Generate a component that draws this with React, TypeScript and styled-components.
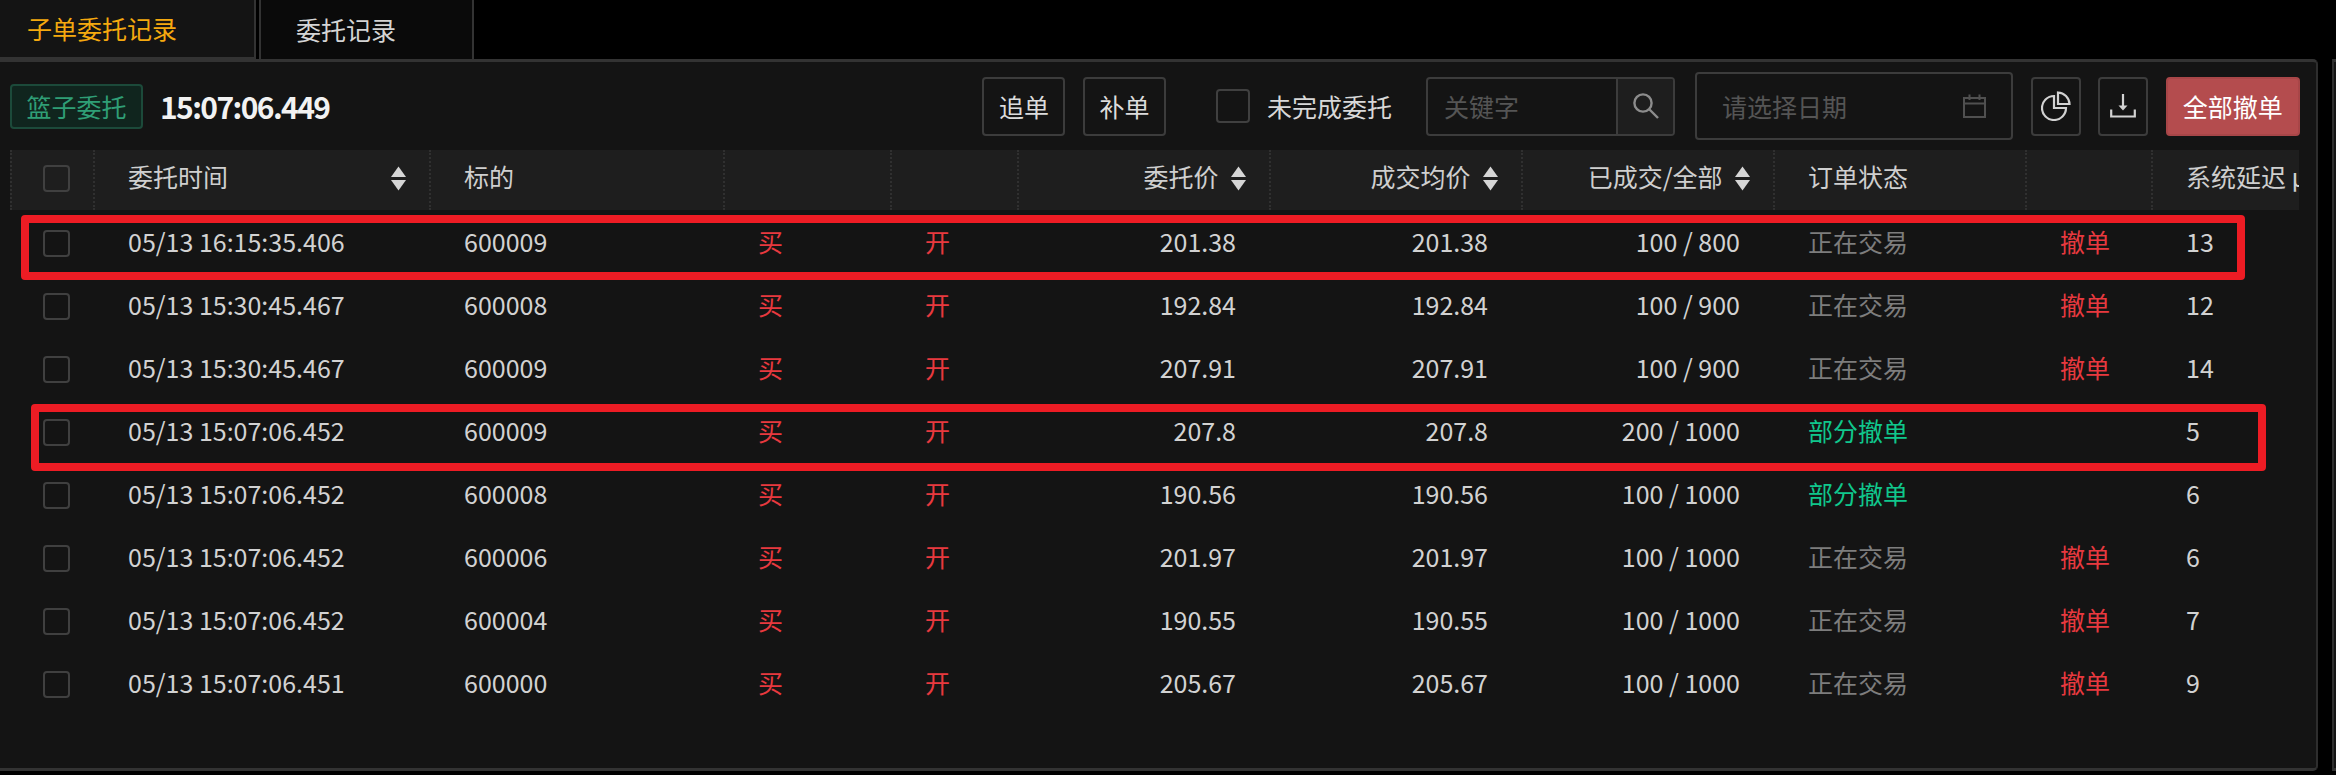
import { FC } from "react";
import styled, { createGlobalStyle } from "styled-components";

const GlobalStyle = createGlobalStyle`
    html, body {
        margin: 0;
        padding: 0;
        background: #000;
    }
    * {
        box-sizing: border-box;
    }
    body {
        font-family: "Noto Sans CJK SC", "Noto Sans", sans-serif;
        font-size: 25px;
        color: #d4d4d4;
    }
`;

const COLUMNS = "85px 336px 294px 167px 127px 252px 252px 252px 252px 126px 146px";

const Page = styled.div`
    width: 2336px;
    height: 775px;
    overflow: hidden;
    display: flex;
    flex-direction: column;
`;

const TabBar = styled.div`
    display: flex;
    height: 60px;
    flex-shrink: 0;
`;

const Tab = styled.div<{ $active?: boolean }>`
    display: flex;
    align-items: center;
    height: ${props => props.$active ? "60px" : "59px"};
    padding: 0 0 2px ${props => props.$active ? "27px" : "35px"};
    width: ${props => props.$active ? "256px" : "215px"};
    margin-right: 3px;
    background: ${props => props.$active ? "#141414" : "#0a0a0a"};
    color: ${props => props.$active ? "#f5a90f" : "#d4d4d4"};
    border-right: 2px solid #333;
    border-left: ${props => props.$active ? "none" : "2px solid #333"};
    border-bottom: ${props => props.$active ? "3px solid #333" : "none"};
`;

const Workspace = styled.div`
    display: flex;
    flex: 1;
    margin-top: -1px;
    height: 712px;
`;

const Panel = styled.div`
    width: 2318px;
    height: 712px;
    background: #141414;
    border-top: 3px solid #333;
    border-right: 2px solid #2e2e2e;
    border-bottom: 3px solid #333;
    border-bottom-right-radius: 5px;
    border-top-right-radius: 5px;
`;

const SidePanel = styled.div`
    width: 4px;
    height: 712px;
    margin-left: 14px;
    background: #141414;
    border-left: 2px solid #2e2e2e;
    border-top: 3px solid #333;
    border-bottom: 3px solid #333;
`;

const Toolbar = styled.div`
    display: flex;
    align-items: center;
    height: 88px;
    padding: 0 16px 0 10px;
`;

const Badge = styled.div`
    display: flex;
    align-items: center;
    justify-content: center;
    width: 133px;
    height: 45px;
    color: #2f9e76;
    background: #10251e;
    border: 2px solid #1c4a3a;
    border-radius: 4px;
`;

const Clock = styled.div`
    margin-left: 17px;
    font-size: 30px;
    font-weight: 700;
    color: #f2f2f2;
    letter-spacing: -1.6px;
`;

const Actions = styled.div`
    display: flex;
    align-items: center;
    margin-left: auto;
`;

const OutlineButton = styled.button<{ $gap?: number }>`
    display: flex;
    align-items: center;
    justify-content: center;
    width: 83px;
    height: 59px;
    padding: 0;
    margin-left: ${props => props.$gap ?? 0}px;
    background: transparent;
    border: 2px solid #3c3c3c;
    border-radius: 4px;
    color: #dcdcdc;
    font: inherit;
`;

const IconButton = styled(OutlineButton)`
    width: 50px;
    margin-left: 17.5px;
`;

const DangerButton = styled.button`
    width: 134.5px;
    height: 59px;
    margin-left: 17.5px;
    padding: 0;
    background: #b44c4e;
    border: 2px solid #a84648;
    border-radius: 4px;
    color: #fff;
    font: inherit;
`;

const Check = styled.input<{ $large?: boolean }>`
    appearance: none;
    display: block;
    margin: 0;
    flex-shrink: 0;
    width: ${props => props.$large ? "34px" : "27px"};
    height: ${props => props.$large ? "34px" : "27px"};
    border: 2px solid #404040;
    border-radius: 4px;
    background: transparent;
`;

const FilterLabel = styled.label`
    display: flex;
    align-items: center;
    gap: 17px;
    margin-left: 50px;
    color: #d8d8d8;
`;

const SearchBox = styled.div`
    display: flex;
    width: 249px;
    height: 59px;
    margin-left: 34px;
    border: 2px solid #3c3c3c;
    border-radius: 4px;
    overflow: hidden;
`;

const TextField = styled.input`
    flex: 1;
    min-width: 0;
    padding: 0 0 0 16px;
    background: transparent;
    border: none;
    outline: none;
    color: #d4d4d4;
    font: inherit;
    &::placeholder {
        color: #555;
        opacity: 1;
    }
`;

const SearchButton = styled.div`
    display: flex;
    align-items: center;
    justify-content: center;
    width: 57px;
    background: #1e1e1e;
    border-left: 2px solid #3c3c3c;
`;

const DateBox = styled.div`
    display: flex;
    align-items: center;
    width: 318px;
    height: 68px;
    margin-left: 20px;
    padding: 0 25px 0 9px;
    border: 2px solid #3c3c3c;
    border-radius: 4px;
`;

const TableFrame = styled.div`
    position: relative;
    margin-left: 10px;
    width: 2289px;
`;

const HeaderRow = styled.div`
    display: grid;
    grid-template-columns: ${COLUMNS};
    height: 60px;
    background: #1e1e1e;
`;

const HeaderCell = styled.div<{ $right?: boolean }>`
    display: flex;
    align-items: center;
    justify-content: ${props => props.$right ? "flex-end" : "flex-start"};
    gap: 11px;
    min-width: 0;
    overflow: hidden;
    white-space: nowrap;
    padding: 0 22.5px 9px 33px;
    color: #cfcfcf;
    border-right: 2px dotted #303030;
    &:first-child {
        padding-left: 31px;
        padding-bottom: 3px;
        border-left: 2px dotted #303030;
    }
    &:last-child {
        border-right: none;
        padding-right: 0;
    }
`;

const SortSlot = styled.span`
    display: flex;
    margin-top: 6px;
`;

const PushedSort = styled(SortSlot)`
    margin-left: auto;
`;

const BodyRow = styled.div`
    display: grid;
    grid-template-columns: ${COLUMNS};
    height: 63px;
`;

const toneColor = {
    plain: "#d2d2d2",
    red: "#e8393f",
    green: "#10c78c",
    muted: "#7d7d7d",
};

const Cell = styled.div<{ $right?: boolean, $tone?: keyof typeof toneColor }>`
    display: flex;
    align-items: center;
    justify-content: ${props => props.$right ? "flex-end" : "flex-start"};
    padding: 0 35px 2px 33px;
    white-space: nowrap;
    color: ${props => toneColor[props.$tone ?? "plain"]};
`;

const CheckCell = styled(Cell)`
    padding-bottom: 0;
    padding-top: 3px;
`;

const Callout = styled.div<{ $left: number, $top: number, $width: number, $height: number }>`
    position: absolute;
    left: ${props => props.$left}px;
    top: ${props => props.$top}px;
    width: ${props => props.$width}px;
    height: ${props => props.$height}px;
    border: 8px solid #ed1c24;
    border-radius: 4px;
    pointer-events: none;
`;

const SortIcon: FC = () => (
    <svg width="17" height="25" viewBox="0 0 17 25">
        <path d="M8.5 0.5 L16 11 H1 Z" fill="#d6d6d6" />
        <path d="M1 14 H16 L8.5 24.5 Z" fill="#d6d6d6" />
    </svg>
);

const SearchIcon: FC = () => (
    <svg width="30" height="30" viewBox="0 0 30 30" fill="none" stroke="#8c8c8c" strokeWidth="2.4">
        <circle cx="12" cy="12" r="8.6" />
        <path d="M18.5 18.5 L27 27" />
    </svg>
);

const CalendarIcon: FC = () => (
    <svg width="23" height="24" viewBox="0 0 23 24" fill="none" stroke="#505050" strokeWidth="2">
        <rect x="1" y="4" width="21" height="19" />
        <path d="M1 9.5 H22 M6.5 0.5 V6 M16.5 0.5 V6" />
    </svg>
);

const PieIcon: FC = () => (
    <svg width="30" height="30" viewBox="0 0 30 30" fill="none" stroke="#d2d2d2" strokeWidth="2.2">
        <path d="M13 5 A12 12 0 1 0 25 17 H13 Z" />
        <path d="M17 1.5 A12 12 0 0 1 28.5 13 H17 Z" />
    </svg>
);

const DownloadIcon: FC = () => (
    <svg width="26" height="24" viewBox="0 0 26 24" fill="none" stroke="#d2d2d2" strokeWidth="2.2">
        <path d="M13 0 V13" />
        <path d="M8.5 11.5 H17.5 L13 16.5 Z" fill="#d2d2d2" stroke="none" />
        <path d="M1.2 15.5 V22.5 H24.8 V15.5" />
    </svg>
);

type Order = {
    time: string,
    code: string,
    price: string,
    filled: string,
    partial?: boolean,
    delay: string,
};

const orders: Order[] = [
    { time: "05/13 16:15:35.406", code: "600009", price: "201.38", filled: "100 / 800", delay: "13" },
    { time: "05/13 15:30:45.467", code: "600008", price: "192.84", filled: "100 / 900", delay: "12" },
    { time: "05/13 15:30:45.467", code: "600009", price: "207.91", filled: "100 / 900", delay: "14" },
    { time: "05/13 15:07:06.452", code: "600009", price: "207.8", filled: "200 / 1000", partial: true, delay: "5" },
    { time: "05/13 15:07:06.452", code: "600008", price: "190.56", filled: "100 / 1000", partial: true, delay: "6" },
    { time: "05/13 15:07:06.452", code: "600006", price: "201.97", filled: "100 / 1000", delay: "6" },
    { time: "05/13 15:07:06.452", code: "600004", price: "190.55", filled: "100 / 1000", delay: "7" },
    { time: "05/13 15:07:06.451", code: "600000", price: "205.67", filled: "100 / 1000", delay: "9" },
];

const App: FC = () => {
    return (
        <Page>
            <GlobalStyle />
            <TabBar>
                <Tab $active>子单委托记录</Tab>
                <Tab>委托记录</Tab>
            </TabBar>
            <Workspace>
                <Panel>
                    <Toolbar>
                        <Badge>篮子委托</Badge>
                        <Clock>15:07:06.449</Clock>
                        <Actions>
                            <OutlineButton>追单</OutlineButton>
                            <OutlineButton $gap={17.5}>补单</OutlineButton>
                            <FilterLabel>
                                <Check type="checkbox" $large />
                                未完成委托
                            </FilterLabel>
                            <SearchBox>
                                <TextField placeholder="关键字" />
                                <SearchButton><SearchIcon /></SearchButton>
                            </SearchBox>
                            <DateBox>
                                <TextField placeholder="请选择日期" />
                                <CalendarIcon />
                            </DateBox>
                            <IconButton><PieIcon /></IconButton>
                            <IconButton><DownloadIcon /></IconButton>
                            <DangerButton>全部撤单</DangerButton>
                        </Actions>
                    </Toolbar>
                    <TableFrame>
                        <HeaderRow>
                            <HeaderCell><Check type="checkbox" /></HeaderCell>
                            <HeaderCell>委托时间<PushedSort><SortIcon /></PushedSort></HeaderCell>
                            <HeaderCell>标的</HeaderCell>
                            <HeaderCell />
                            <HeaderCell />
                            <HeaderCell $right>委托价<SortSlot><SortIcon /></SortSlot></HeaderCell>
                            <HeaderCell $right>成交均价<SortSlot><SortIcon /></SortSlot></HeaderCell>
                            <HeaderCell $right>已成交/全部<SortSlot><SortIcon /></SortSlot></HeaderCell>
                            <HeaderCell>订单状态</HeaderCell>
                            <HeaderCell />
                            <HeaderCell>系统延迟 μs</HeaderCell>
                        </HeaderRow>
                        {orders.map((order, index) => (
                            <BodyRow key={index}>
                                <CheckCell><Check type="checkbox" /></CheckCell>
                                <Cell>{order.time}</Cell>
                                <Cell>{order.code}</Cell>
                                <Cell $tone="red">买</Cell>
                                <Cell $tone="red">开</Cell>
                                <Cell $right>{order.price}</Cell>
                                <Cell $right>{order.price}</Cell>
                                <Cell $right>{order.filled}</Cell>
                                <Cell $tone={order.partial ? "green" : "muted"}>{order.partial ? "部分撤单" : "正在交易"}</Cell>
                                <Cell $tone="red">{order.partial ? "" : "撤单"}</Cell>
                                <Cell>{order.delay}</Cell>
                            </BodyRow>
                        ))}
                        <Callout $left={11} $top={65} $width={2224} $height={65} />
                        <Callout $left={21} $top={254} $width={2235} $height={67} />
                    </TableFrame>
                </Panel>
                <SidePanel />
            </Workspace>
        </Page>
    );
};

export default App;
